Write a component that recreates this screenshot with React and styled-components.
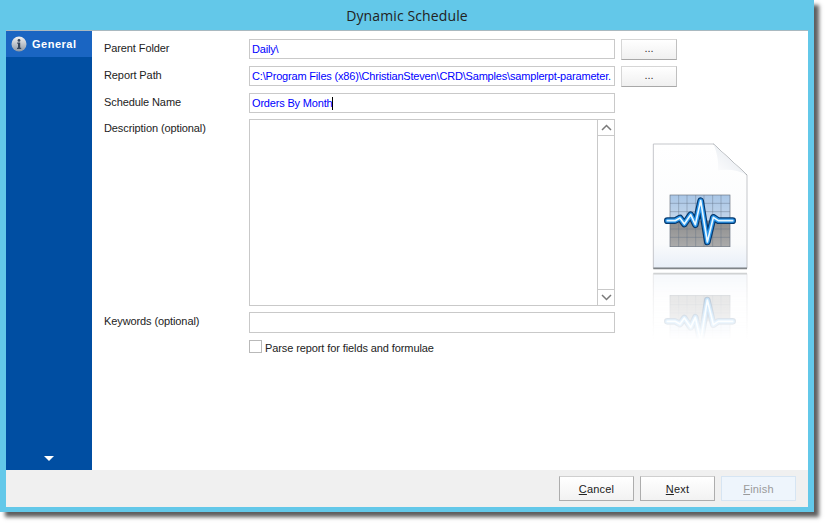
import React from "react";
import styled, { createGlobalStyle } from "styled-components";

const Global = createGlobalStyle`
  html, body { margin: 0; padding: 0; background: #fff; }
  body { width: 829px; height: 527px; overflow: hidden; font-family: "Liberation Sans", Arial, sans-serif; }
  * { box-sizing: border-box; }
`;

const Window = styled.div`
  width: 814px;
  height: 512px;
  background: #63c8e9;
  padding: 0 6px 5px;
  display: flex;
  flex-direction: column;
  box-shadow: 5px 5px 4px 0 rgba(40, 40, 40, 0.75);
`;

const TitleBar = styled.div`
  height: 30px;
  flex: none;
  display: flex;
  align-items: center;
  justify-content: center;
  font-family: "Open Sans", sans-serif;
  font-size: 14px;
  letter-spacing: 0.12px;
  color: #222;
`;

const Client = styled.div`
  flex: 1;
  min-height: 0;
  display: flex;
  flex-direction: column;
  background: #fff;
  border-top: 1px solid #a9b9c0;
`;

const Upper = styled.div`
  flex: 1;
  min-height: 0;
  display: flex;
`;

const Sidebar = styled.nav`
  width: 86px;
  flex: none;
  background: #004ea2;
  display: flex;
  flex-direction: column;
  justify-content: space-between;
`;

const NavItem = styled.div`
  height: 26px;
  background: #1a65c2;
  display: flex;
  align-items: center;
  gap: 5px;
  padding-left: 5px;
  color: #fff;
  font-weight: 700;
  font-size: 11px;
  letter-spacing: 0.5px;
`;

const MoreArrow = styled.div`
  align-self: center;
  margin: 0 0 9px 0;
  width: 0;
  height: 0;
  border-left: 5px solid transparent;
  border-right: 5px solid transparent;
  border-top: 5px solid #fff;
`;

const Form = styled.div`
  padding: 8px 0 0 12px;
  display: grid;
  grid-template-columns: 145px 366px 6px 56px 80px;
  grid-template-rows: 27px 27px 26px 193px 28px auto;
  align-content: start;
`;

const Label = styled.div`
  grid-column: 1;
  grid-row: ${(p) => p.$row};
  font-size: 11px;
  line-height: 13px;
  color: #222;
  padding-top: 3px;
  letter-spacing: -0.1px;
`;

const Field = styled.div`
  grid-column: 2;
  grid-row: ${(p) => p.$row};
  height: ${(p) => p.$h || 20}px;
  border: 1px solid #c9c9c9;
  background: #fff;
  padding: 3px 2px 0 2px;
  font-size: 11px;
  line-height: 13px;
  letter-spacing: -0.18px;
  color: #0000ff;
  white-space: nowrap;
  overflow: hidden;
`;

const Caret = styled.span`
  display: inline-block;
  width: 1px;
  height: 13px;
  background: #000;
  vertical-align: top;
`;

const Browse = styled.button`
  grid-column: 4;
  grid-row: ${(p) => p.$row};
  width: 56px;
  height: 21px;
  padding: 0 0 3px;
  border: 1px solid #d6d6d6;
  border-bottom-color: #a8a8a8;
  border-right-color: #c0c0c0;
  background: linear-gradient(#ffffff, #f0f0f0);
  font: 11px "Liberation Sans", sans-serif;
  color: #333;
`;

const Memo = styled.div`
  grid-column: 2;
  grid-row: 4;
  height: 187px;
  border: 1px solid #c9c9c9;
  display: flex;
  justify-content: flex-end;
`;

const ScrollTrack = styled.div`
  width: 17px;
  border-left: 1px solid #c9c9c9;
  display: flex;
  flex-direction: column;
  justify-content: space-between;
`;

const ScrollButton = styled.div`
  height: 16px;
  display: flex;
  align-items: center;
  justify-content: center;
  border-bottom: ${(p) => (p.$top ? "1px solid #c9c9c9" : "0")};
  border-top: ${(p) => (p.$top ? "0" : "1px solid #c9c9c9")};
`;

const CheckRow = styled.label`
  grid-column: 2;
  grid-row: 6;
  display: flex;
  align-items: flex-start;
  gap: 3px;
  font-size: 11px;
  line-height: 13px;
  color: #222;
  letter-spacing: -0.1px;
`;

const CheckText = styled.span`
  padding-top: 2px;
`;

const CheckBox = styled.span`
  width: 13px;
  height: 13px;
  border: 1px solid #b9b9b9;
  background: #fff;
`;

const Art = styled.aside`
  grid-column: 4 / 6;
  grid-row: 4 / 7;
  padding: 21px 0 0 29px;
  display: flex;
  flex-direction: column;
`;

const Reflection = styled.div`
  margin-top: 2px;
  height: 68px;
  overflow: hidden;
  opacity: 0.36;
  -webkit-mask-image: linear-gradient(#000 15%, transparent 100%);
  mask-image: linear-gradient(#000 15%, transparent 100%);
  svg { transform: scaleY(-1); display: block; }
`;

const Footer = styled.footer`
  height: 37px;
  flex: none;
  background: #f0f0f0;
  display: flex;
  justify-content: flex-end;
  gap: 6px;
  padding: 6px 12px 0 0;
`;

const Action = styled.button`
  width: 75px;
  height: 25px;
  padding: 0;
  border: 1px solid ${(p) => (p.disabled ? "#d6e5f3" : "#adadad")};
  border-top-color: ${(p) => (p.disabled ? "#d6e5f3" : "#cfcfcf")};
  background: ${(p) => (p.disabled ? "#eef5fc" : "linear-gradient(#ffffff, #f2f2f2)")};
  color: ${(p) => (p.disabled ? "#9a9a9a" : "#222")};
  font: 11px "Liberation Sans", sans-serif;
  letter-spacing: 0.2px;
`;

const Key = styled.span`
  text-decoration: underline;
`;

const Info = () => (
  <svg width="16" height="16" viewBox="0 0 16 16">
    <defs>
      <linearGradient id="inf" x1="0" y1="0" x2="0" y2="1">
        <stop offset="0" stopColor="#f2f2f2" />
        <stop offset="1" stopColor="#8d98a5" />
      </linearGradient>
    </defs>
    <circle cx="8" cy="8" r="7.5" fill="url(#inf)" />
    <circle cx="8" cy="4.4" r="1.4" fill="#37475c" />
    <path d="M6.2 6.6h3v5.2h1v1.2H6v-1.2h1V7.8h-.8z" fill="#37475c" />
  </svg>
);

const wave =
  "M112 272H135L150 264L163 282L182 254L196 284L212 212L232 336L250 262L265 272H308";

const Doc = ({ id }) => {
  const vLines = [146, 171, 197, 222, 248, 273];
  const hLines = [220, 245, 272, 297, 322];
  return (
    <svg width="110" height="130" viewBox="60 30 330 390">
      <defs>
        <linearGradient id={`${id}p`} x1="0" y1="0" x2="0" y2="1">
          <stop offset="0" stopColor="#ffffff" />
          <stop offset="0.8" stopColor="#fafbfc" />
          <stop offset="1" stopColor="#e8eff8" />
        </linearGradient>
        <linearGradient id={`${id}c`} x1="0" y1="0" x2="0" y2="1">
          <stop offset="0" stopColor="#a9c6e6" />
          <stop offset="0.5" stopColor="#c4d6ea" />
          <stop offset="0.5" stopColor="#8c8c8c" />
          <stop offset="1" stopColor="#ababab" />
        </linearGradient>
        <linearGradient id={`${id}f`} x1="0" y1="1" x2="1" y2="0">
          <stop offset="0" stopColor="#ffffff" />
          <stop offset="0.55" stopColor="#edf0f4" />
          <stop offset="1" stopColor="#bcc1c6" />
        </linearGradient>
      </defs>
      <path d="M70 42H250L351 135V415H70Z" fill={`url(#${id}p)`} stroke="#b9bcc0" strokeWidth="2.5" />
      <path d="M70 415H351" stroke="#7f8488" strokeWidth="5" />
      <path d="M250 42L351 135" stroke="#9a9ea2" strokeWidth="3" />
      <path d="M250 42C262 70 266 95 264 121C295 116 325 120 351 135Z" fill={`url(#${id}f)`} />
      <rect x="120" y="195" width="180" height="155" fill={`url(#${id}c)`} />
      {vLines.map((x) => (
        <path key={x} d={`M${x} 195V350`} stroke="#5f6f84" strokeOpacity="0.6" strokeWidth="2" />
      ))}
      {hLines.map((y) => (
        <path key={y} d={`M120 ${y}H300`} stroke="#5f6f84" strokeOpacity="0.6" strokeWidth="2" />
      ))}
      <rect x="120" y="195" width="180" height="155" fill="none" stroke="#6b7480" strokeWidth="2" />
      <path d={wave} fill="none" stroke="#04386e" strokeWidth="20" strokeLinejoin="round" strokeLinecap="round" />
      <path d={wave} fill="none" stroke="#2b96ea" strokeWidth="13" strokeLinejoin="round" strokeLinecap="round" />
      <path d={wave} fill="none" stroke="#e9f8ff" strokeWidth="5" strokeLinejoin="round" strokeLinecap="round" />
    </svg>
  );
};

const Chevron = ({ up }) => (
  <svg width="11" height="7" viewBox="0 0 11 7">
    <path d={up ? "M1 6L5.5 1.5L10 6" : "M1 1L5.5 5.5L10 1"} fill="none" stroke="#7a7a7a" strokeWidth="1.5" />
  </svg>
);

export default function App() {
  return (
    <>
      <Global />
      <Window>
        <TitleBar>Dynamic Schedule</TitleBar>
        <Client>
          <Upper>
            <Sidebar>
              <NavItem>
                <Info />
                General
              </NavItem>
              <MoreArrow />
            </Sidebar>
            <Form>
              <Label $row={1}>Parent Folder</Label>
              <Field $row={1}>Daily\</Field>
              <Browse $row={1}>...</Browse>

              <Label $row={2}>Report Path</Label>
              <Field $row={2}>C:\Program Files (x86)\ChristianSteven\CRD\Samples\samplerpt-parameter.</Field>
              <Browse $row={2}>...</Browse>

              <Label $row={3}>Schedule Name</Label>
              <Field $row={3}>
                Orders By Month
                <Caret />
              </Field>

              <Label $row={4}>Description (optional)</Label>
              <Memo>
                <ScrollTrack>
                  <ScrollButton $top>
                    <Chevron up />
                  </ScrollButton>
                  <ScrollButton>
                    <Chevron />
                  </ScrollButton>
                </ScrollTrack>
              </Memo>
              <Art>
                <Doc id="a" />
                <Reflection>
                  <Doc id="b" />
                </Reflection>
              </Art>

              <Label $row={5}>Keywords (optional)</Label>
              <Field $row={5} $h={21} />

              <CheckRow>
                <CheckBox />
                <CheckText>Parse report for fields and formulae</CheckText>
              </CheckRow>
            </Form>
          </Upper>
          <Footer>
            <Action>
              <Key>C</Key>ancel
            </Action>
            <Action>
              <Key>N</Key>ext
            </Action>
            <Action disabled>
              <Key>F</Key>inish
            </Action>
          </Footer>
        </Client>
      </Window>
    </>
  );
}
